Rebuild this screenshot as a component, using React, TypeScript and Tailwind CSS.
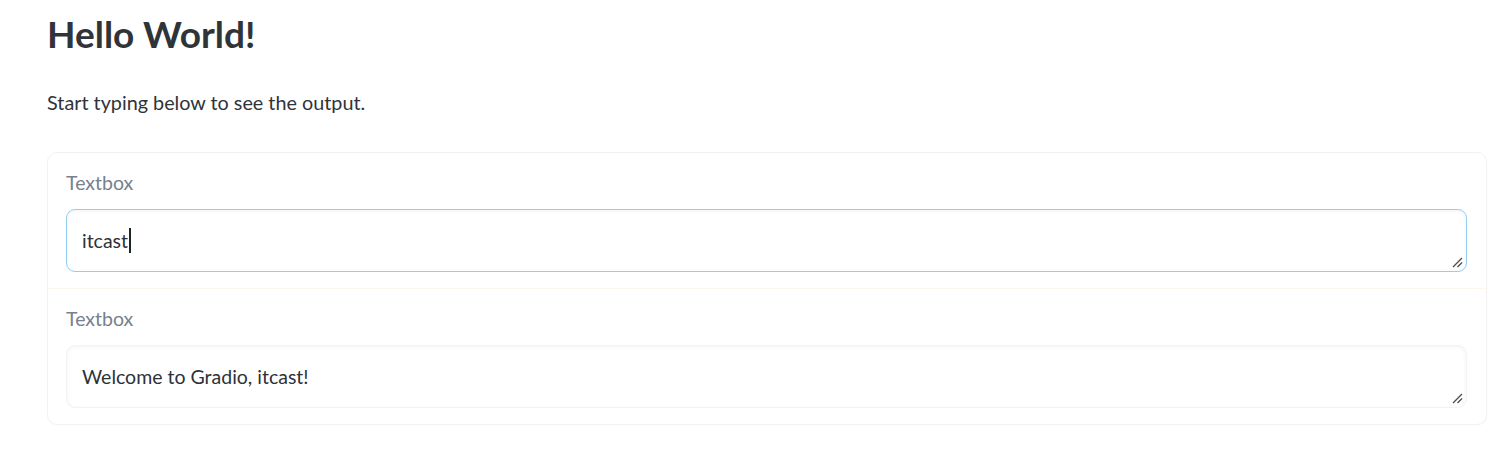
import React from 'react';

const font = { fontFamily: 'Lato, "Open Sans", sans-serif' };

function Grip() {
  return (
    <svg className="absolute right-[3px] bottom-[3px] w-[11px] h-[11px]" viewBox="0 0 11 11">
      <path d="M10 1 L1 10 M10 5.5 L5.5 10" stroke="#505050" strokeWidth="1.4" />
    </svg>
  );
}

function TextBlock({ value, focused, last }: { value: string; focused?: boolean; last?: boolean }) {
  return (
    <div className={`pl-[18px] pr-[19px] pt-[17px] pb-[16px] ${last ? '' : 'border-b border-[#fbf6ee]'}`}>
      <div className="text-[19.5px] leading-[26px] text-[#77818d] mb-[13px]">Textbox</div>
      <div
        className={`relative h-[63px] rounded-[9px] border bg-white px-[15px] flex items-center shadow-[inset_0_1px_4px_rgba(0,0,0,0.05)] ${
          focused ? 'border-[#93cdf5]' : 'border-[#f4f3ef]'
        }`}
      >
        <span className="text-[19.5px] text-[#2d3239]">{value}</span>
        {focused && <span className="ml-[1px] w-[2px] h-[25px] bg-[#1f2428]" />}
        <Grip />
      </div>
    </div>
  );
}

export default function App() {
  return (
    <div className="min-h-[472px] bg-white pl-[47px] pr-[5px] pt-[11px]" style={font}>
      <h1 className="text-[37px] leading-[46px] font-bold text-[#2f3439]">Hello World!</h1>
      <p className="mt-[32px] text-[19.8px] leading-[26px] text-[#2f3439]">Start typing below to see the output.</p>

      <div className="mt-[37px] rounded-[10px] border border-[#f4f2ee] bg-white shadow-[0_1px_2px_rgba(0,0,0,0.02)]">
        <TextBlock value="itcast" focused />
        <TextBlock value="Welcome to Gradio, itcast!" last />
      </div>
    </div>
  );
}
